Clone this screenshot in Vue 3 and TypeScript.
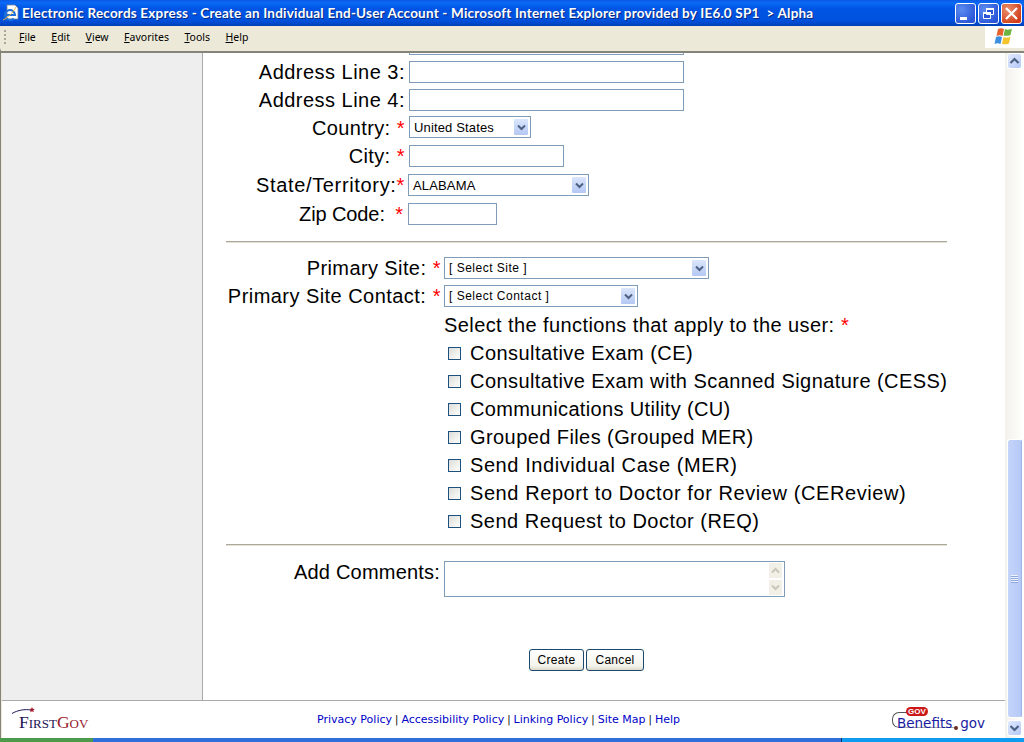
<template>
  <div class="window">
    <header class="titlebar">
      <svg class="ie-icon" width="18" height="18" viewBox="0 0 18 18">
        <path d="M5 1h8l3 3v11H5z" fill="#fff" stroke="#7a869a" stroke-width="0.8" />
        <path d="M4.500 11h8.500a5 5 0 1 0-1.300 3.400" fill="none" stroke="#1f6fd8" stroke-width="2.200" />
        <path d="M1 16c3-1 10-7 13-13" fill="none" stroke="#e8b93a" stroke-width="1" />
      </svg>
      <span class="title-text">{{ title }}</span>
      <div class="win-buttons">
        <button class="win-btn" aria-label="Minimize">
          <svg width="19" height="19" viewBox="0 0 19 19"><rect x="4" y="13" width="7" height="3" fill="#fff" /></svg>
        </button>
        <button class="win-btn" aria-label="Restore">
          <svg width="19" height="19" viewBox="0 0 19 19">
            <path d="M7.500 4.500h7v6h-7z M4.500 8.500h7v6h-7z" fill="#2a55d8" stroke="#fff" />
            <path d="M7 4h8v2H7zM4 8h8v2H4z" fill="#fff" />
          </svg>
        </button>
        <button class="win-btn close" aria-label="Close">
          <svg width="19" height="19" viewBox="0 0 19 19"><path d="M4 4l11 11M15 4L4 15" stroke="#fff" stroke-width="2.200" /></svg>
        </button>
      </div>
    </header>

    <nav class="menubar">
      <span class="grip"></span>
      <span v-for="item in menu" :key="item.label" class="menu-item"><u>{{ item.key }}</u>{{ item.label }}</span>
      <div class="flag">
        <svg width="22" height="20" viewBox="0 0 22 20">
          <path d="M4 2c2-1 4-1 6 0l-1.500 7c-2-1-4-1-6 0z" fill="#e8622c" />
          <path d="M11 2c2 1 5 1 7-.5L16.500 8c-2 1-5 1-7 .5z" fill="#6cb33f" />
          <path d="M2 10c2-1 4-1 6 0l-1.500 7c-2-1-4-1-6 0z" fill="#3d8fe0" />
          <path d="M9.500 10c2 1 5 1 7-.5L15 16.500c-2 1-5 1-7 .5z" fill="#f5c42c" />
        </svg>
      </div>
    </nav>

    <div class="viewport">
      <div class="page">
        <div class="columns">
          <aside class="sidebar"></aside>
          <main class="main">
            <div class="clip-row"><input class="field wide" type="text" /></div>

            <div class="row"><label class="lbl ls-addr">Address Line 3:</label><input class="field wide" type="text" /></div>
            <div class="row"><label class="lbl ls-addr">Address Line 4:</label><input class="field wide" type="text" /></div>
            <div class="row">
              <label class="lbl">Country: <span class="req">*</span></label>
              <div class="select country">United States<span class="drop"><svg width="9" height="7" viewBox="0 0 9 7"><path d="M1 1.500l3.500 3.500L8 1.500" fill="none" stroke="#4d6185" stroke-width="2" /></svg></span></div>
            </div>
            <div class="row"><label class="lbl">City: <span class="req">*</span></label><input class="field city" type="text" /></div>
            <div class="row nudge">
              <label class="lbl ls-state">State/Territory:<span class="req flush">*</span></label>
              <div class="select state">ALABAMA<span class="drop"><svg width="9" height="7" viewBox="0 0 9 7"><path d="M1 1.500l3.500 3.500L8 1.500" fill="none" stroke="#4d6185" stroke-width="2" /></svg></span></div>
            </div>
            <div class="row nudge"><label class="lbl ls-zip">Zip Code: <span class="req wide-gap">*</span></label><input class="field zip" type="text" /></div>

            <hr class="rule first" />

            <div class="row site">
              <label class="lbl ls-site">Primary Site: <span class="req">*</span></label>
              <div class="select primary">[ Select Site ]<span class="drop"><svg width="9" height="7" viewBox="0 0 9 7"><path d="M1 1.500l3.500 3.500L8 1.500" fill="none" stroke="#4d6185" stroke-width="2" /></svg></span></div>
            </div>
            <div class="row site">
              <label class="lbl ls-contact">Primary Site Contact: <span class="req">*</span></label>
              <div class="select contact">[ Select Contact ]<span class="drop"><svg width="9" height="7" viewBox="0 0 9 7"><path d="M1 1.500l3.500 3.500L8 1.500" fill="none" stroke="#4d6185" stroke-width="2" /></svg></span></div>
            </div>

            <div class="functions">
              <div class="fn-title">Select the functions that apply to the user: <span class="req">*</span></div>
              <label v-for="fn in functions" :key="fn.label" class="fn-row">
                <input class="check" type="checkbox" />
                <span :style="{ letterSpacing: fn.spacing + 'px' }">{{ fn.label }}</span>
              </label>
            </div>

            <hr class="rule second" />

            <div class="comments">
              <label class="lbl ls-comments">Add Comments:</label>
              <div class="textarea">
                <div class="ta-scroll">
                  <span class="ta-btn"><svg width="9" height="7" viewBox="0 0 9 7"><path d="M1 5.500L4.500 2 8 5.500" fill="none" stroke="#c9c7ba" stroke-width="2" /></svg></span>
                  <span class="ta-btn"><svg width="9" height="7" viewBox="0 0 9 7"><path d="M1 1.500l3.500 3.500L8 1.500" fill="none" stroke="#c9c7ba" stroke-width="2" /></svg></span>
                </div>
              </div>
            </div>

            <div class="actions">
              <button class="btn">Create</button>
              <button class="btn">Cancel</button>
            </div>
          </main>
        </div>

        <footer class="footer">
          <div class="firstgov">
            <svg class="swoosh" width="24" height="8" viewBox="0 0 24 8">
              <path d="M0 6.500C6 3 13 2 19 3" fill="none" stroke="#1c1456" stroke-width="1" />
              <path d="M20 0l.8 1.800 2 .2-1.500 1.300.5 2-1.800-1-1.800 1 .5-2L17.200 2l2-.2z" fill="#a3182c" />
            </svg>
            <span class="fg-first">F<small>IRST</small></span><span class="fg-gov">G<small>OV</small></span>
          </div>
          <div class="links">
            <template v-for="(link, i) in links" :key="link">
              <span v-if="i > 0" class="pipe">|</span><a class="link">{{ link }}</a>
            </template>
          </div>
          <div class="benefits">
            <span class="curve"></span>
            <span class="pill">GOV</span>
            <span class="b-text">Benefits<i class="dot"></i>gov</span>
          </div>
        </footer>
      </div>

      <div class="scrollbar">
        <span class="sb-btn"><svg width="11" height="8" viewBox="0 0 11 8"><path d="M1.500 6L5.500 2l4 4" fill="none" stroke="#4d6185" stroke-width="2.200" /></svg></span>
        <div class="sb-track">
          <div class="sb-thumb"><span class="sb-grip"></span></div>
        </div>
        <span class="sb-btn"><svg width="11" height="8" viewBox="0 0 11 8"><path d="M1.500 2l4 4 4-4" fill="none" stroke="#4d6185" stroke-width="2.200" /></svg></span>
      </div>
    </div>

    <div class="taskbar"></div>
  </div>
</template>

<script setup lang="ts">
const title =
  'Electronic Records Express - Create an Individual End-User Account - Microsoft Internet Explorer provided by IE6.0 SP1  > Alpha'

const menu = [
  { key: 'F', label: 'ile' },
  { key: 'E', label: 'dit' },
  { key: 'V', label: 'iew' },
  { key: 'F', label: 'avorites' },
  { key: 'T', label: 'ools' },
  { key: 'H', label: 'elp' }
]

// the hinted original runs a little wider on some lines
const functions = [
  { label: 'Consultative Exam (CE)', spacing: 0.44 },
  { label: 'Consultative Exam with Scanned Signature (CESS)', spacing: 0.435 },
  { label: 'Communications Utility (CU)', spacing: 0.35 },
  { label: 'Grouped Files (Grouped MER)', spacing: 0.42 },
  { label: 'Send Individual Case (MER)', spacing: 0.58 },
  { label: 'Send Report to Doctor for Review (CEReview)', spacing: 0.58 },
  { label: 'Send Request to Doctor (REQ)', spacing: 0.49 }
]

const links = ['Privacy Policy', 'Accessibility Policy', 'Linking Policy', 'Site Map', 'Help']
</script>

<style>
html,
body {
  margin: 0;
  overflow: hidden;
  background: #fff;
}
</style>

<style scoped>
.window {
  width: 1024px;
  height: 742px;
  display: flex;
  flex-direction: column;
  overflow: hidden;
  font-family: "Liberation Sans", Arial, sans-serif;
  color: #000;
}

/* Title bar */
.titlebar {
  height: 26px;
  flex: none;
  display: flex;
  align-items: center;
  padding: 0 2px 0 2px;
  box-sizing: border-box;
  background: linear-gradient(#0a5ae6 0, #0a6af5 3px, #0055e5 8px, #0052de 20px, #0146c8 24px, #0040b0 26px);
}

.ie-icon {
  flex: none;
  margin-right: 2px;
}

.title-text {
  flex: 1;
  min-width: 0;
  overflow: hidden;
  white-space: pre;
  font: bold 13.5px Lato, sans-serif;
  letter-spacing: 0.2px;
  color: #fff;
  text-shadow: 1px 1px 0 #0a2a80;
}

.win-buttons {
  display: flex;
  gap: 2px;
  flex: none;
}

.win-btn {
  width: 21px;
  height: 21px;
  padding: 0;
  border: 1px solid #fff;
  border-radius: 3px;
  box-sizing: border-box;
  background: radial-gradient(circle at 30% 30%, #5b8cf0, #2a55d8 80%);
  display: flex;
  align-items: center;
  justify-content: center;
}

.win-btn svg {
  flex: none;
}

.win-btn.close {
  background: radial-gradient(circle at 30% 30%, #e8906c, #d23c18 80%);
}

/* Menu bar */
.menubar {
  height: 22px;
  flex: none;
  display: flex;
  align-items: center;
  box-sizing: border-box;
  background: #ece9d8;
  font: 10.5px "Noto Sans", sans-serif;
  padding-left: 4px;
}

.grip {
  width: 2px;
  height: 14px;
  margin-right: 13px;
  background: repeating-linear-gradient(#a9a795 0 2px, transparent 2px 4px);
}

.menu-item {
  margin-right: 15.5px;
}

.flag {
  margin-left: auto;
  width: 39px;
  height: 22px;
  background: #fff;
  display: flex;
  align-items: center;
  justify-content: center;
}

/* Page */
.viewport {
  flex: 1;
  min-height: 0;
  display: flex;
  border-top: 3px solid #ece9d8;
  box-shadow: inset 0 2px 0 #85847a;
  padding-top: 2px;
  border-left: 1px solid #85847a;
  background: #fff;
}

.page {
  flex: 1;
  min-width: 0;
  display: flex;
  flex-direction: column;
  border-left: 1px solid #ece9d8;
}

.columns {
  flex: 1;
  min-height: 0;
  display: flex;
}

.sidebar {
  width: 200px;
  flex: none;
  background: #eee;
  border-right: 1px solid #aaa;
}

.main {
  flex: 1;
  min-width: 0;
  font-size: 20px;
}

.clip-row {
  height: 2px;
  margin-bottom: 3px;
  overflow: hidden;
  display: flex;
  align-items: flex-end;
  padding-left: 202px;
}

.row {
  height: 28px;
  display: flex;
  align-items: center;
}

.lbl {
  width: 202px;
  flex: none;
  text-align: right;
  white-space: nowrap;
  letter-spacing: 0.35px;
}

.ls-addr {
  letter-spacing: 0.48px;
}

.ls-state {
  letter-spacing: 0.66px;
}

.ls-zip {
  width: 200px;
  letter-spacing: -0.1px;
}

.ls-site {
  letter-spacing: 0.4px;
}

.ls-contact {
  letter-spacing: 0.45px;
}

.ls-comments {
  letter-spacing: 0.2px;
}

.req {
  color: #f00;
  margin-left: 0.5px;
}

.req.flush {
  margin-left: 0;
}

.req.wide-gap {
  margin-left: 5px;
}

.field,
.select {
  box-sizing: border-box;
  height: 22px;
  margin: 0 0 0 4px;
  padding: 0;
  border: 1px solid #7f9db9;
  background: #fff;
  flex: none;
}

.wide {
  width: 275px;
}

.city {
  width: 155px;
}

.zip {
  width: 89px;
  margin-left: 5px;
}

.select {
  position: relative;
  display: flex;
  align-items: center;
  padding-left: 4px;
  font-size: 13px;
  letter-spacing: 0.15px;
}

.drop {
  position: absolute;
  right: 1px;
  top: 1px;
  width: 16px;
  height: 18px;
  border-radius: 2px;
  background: linear-gradient(#dbe6fb, #b4c8f3);
  border: 1px solid #fff;
  box-sizing: border-box;
  display: flex;
  align-items: center;
  justify-content: center;
}

.country {
  width: 122px;
  margin-bottom: 2px;
}

.state {
  width: 181px;
  margin-left: 3px;
}

.nudge {
  margin-top: 1px;
}

.rule {
  height: 2px;
  width: 721px;
  margin: 0 0 0 23px;
  border: 0;
  background: linear-gradient(#aca899 50%, #e5e3d8 50%);
}

.rule.first {
  margin-top: 13px;
  margin-bottom: 11px;
}

.rule.second {
  margin-top: 9px;
  margin-bottom: 15px;
}

.site .lbl {
  width: 238px;
}

.site .select {
  margin-left: 3px;
  font-size: 12px;
  letter-spacing: 0.5px;
}

.primary {
  width: 265px;
}

.contact {
  width: 194px;
}

.functions {
  margin-top: 1px;
  margin-left: 241px;
  white-space: nowrap;
  letter-spacing: 0.41px;
}

.fn-title {
  height: 28px;
  line-height: 28px;
}

.fn-row {
  height: 28px;
  display: flex;
  align-items: center;
}

.check {
  appearance: none;
  width: 13px;
  height: 13px;
  margin: 1px 9px 0 4px;
  flex: none;
  box-sizing: border-box;
  border: 1px solid #1c5180;
  background: linear-gradient(135deg, #dcdcd7, #fff);
}

.comments {
  display: flex;
  align-items: flex-start;
}

.comments .lbl {
  width: 237px;
  line-height: 22px;
}

.textarea {
  box-sizing: border-box;
  width: 341px;
  height: 36px;
  margin-left: 4px;
  border: 1px solid #7f9db9;
  display: flex;
  justify-content: flex-end;
  padding-right: 1px;
}

.ta-scroll {
  width: 15px;
  display: flex;
  flex-direction: column;
}

.ta-btn {
  flex: 1;
  background: #f1efe6;
  border: 1px solid #fff;
  border-radius: 2px;
  box-sizing: border-box;
  display: flex;
  align-items: center;
  justify-content: center;
}

.actions {
  margin-top: 52px;
  display: flex;
  gap: 2px;
  padding-left: 326px;
}

.btn {
  height: 22px;
  padding: 0;
  border: 1px solid #1c4a6e;
  border-radius: 3px;
  background: linear-gradient(#fff, #f3f3ec 80%, #dcd8c8);
  font: 12px "Liberation Sans", Arial, sans-serif;
  letter-spacing: 0.3px;
  color: #000;
}

.btn:first-child {
  width: 55px;
}

.btn:last-child {
  width: 58px;
}

/* Footer */
.footer {
  height: 38px;
  flex: none;
  box-sizing: border-box;
  border-top: 1px solid #aaa;
  display: grid;
  grid-template-columns: 200px 1fr 210px;
  align-items: center;
}

.firstgov {
  position: relative;
  font: 17.5px "Liberation Serif", serif;
  padding: 5px 0 0 17px;
  color: #1c1456;
  white-space: nowrap;
}

.firstgov small {
  font-size: 13px;
}

.fg-gov {
  color: #98182c;
}

.swoosh {
  position: absolute;
  left: 10px;
  top: 0;
}

.links {
  text-align: center;
  font: 11px "DejaVu Sans", sans-serif;
  white-space: nowrap;
}

.link {
  color: #0000c8;
}

.pipe {
  font-size: 10px;
  margin: 0 3px;
}

.benefits {
  position: relative;
  height: 26px;
  font: 13.5px/14px "DejaVu Sans", sans-serif;
  color: #1a1aa0;
  margin-left: 97px;
}

.b-text {
  position: absolute;
  left: 5px;
  top: 9px;
  white-space: nowrap;
}

.pill {
  position: absolute;
  left: 14px;
  top: 0;
  width: 22px;
  height: 9px;
  border-radius: 5px;
  background: #cc1818;
  color: #fff;
  font: bold 8px/9px "Liberation Sans", Arial, sans-serif;
  text-align: center;
}

.curve {
  position: absolute;
  left: 0;
  top: 5px;
  width: 62px;
  height: 16px;
  box-sizing: border-box;
  border: 1px solid #555;
  border-right: 0;
  border-radius: 7px 0 0 7px;
  clip-path: polygon(0 0, 16px 0, 16px 12px, 100% 12px, 100% 100%, 0 100%);
}

.dot {
  display: inline-block;
  width: 4px;
  height: 4px;
  border-radius: 50%;
  background: #6a2a20;
  margin: 0 2px;
  vertical-align: -2px;
}

/* Page scrollbar */
.scrollbar {
  width: 17px;
  margin-right: 2px;
  padding-bottom: 2px;
  box-sizing: border-box;
  flex: none;
  display: flex;
  flex-direction: column;
  background: linear-gradient(90deg, #f3f1ec, #fefefb);
}

.sb-btn {
  height: 16px;
  margin-left: 2px;
  flex: none;
  box-sizing: border-box;
  border: 1px solid #fff;
  border-radius: 3px;
  background: linear-gradient(135deg, #e2eafe, #b4c8f6);
  display: flex;
  align-items: center;
  justify-content: center;
}

.sb-track {
  flex: 1;
  display: flex;
  flex-direction: column;
  justify-content: flex-end;
  padding-bottom: 2px;
}

.sb-thumb {
  height: 279px;
  margin-left: 2px;
  box-sizing: border-box;
  border: 1px solid #fff;
  border-right-color: #9db4e6;
  border-radius: 3px;
  background: linear-gradient(90deg, #c4d4fb, #b6c9f6);
  display: flex;
  align-items: center;
  justify-content: center;
}

.sb-grip {
  width: 7px;
  height: 8px;
  background: repeating-linear-gradient(#eef3ff 0 1px, #8fa8dc 1px 2px);
}

.taskbar {
  height: 4px;
  flex: none;
  background: linear-gradient(90deg, #4d9a4d 0 93px, #2f6fdc 93px 841px, #12346e 841px 842px, #0f9cf0 842px);
}
</style>
